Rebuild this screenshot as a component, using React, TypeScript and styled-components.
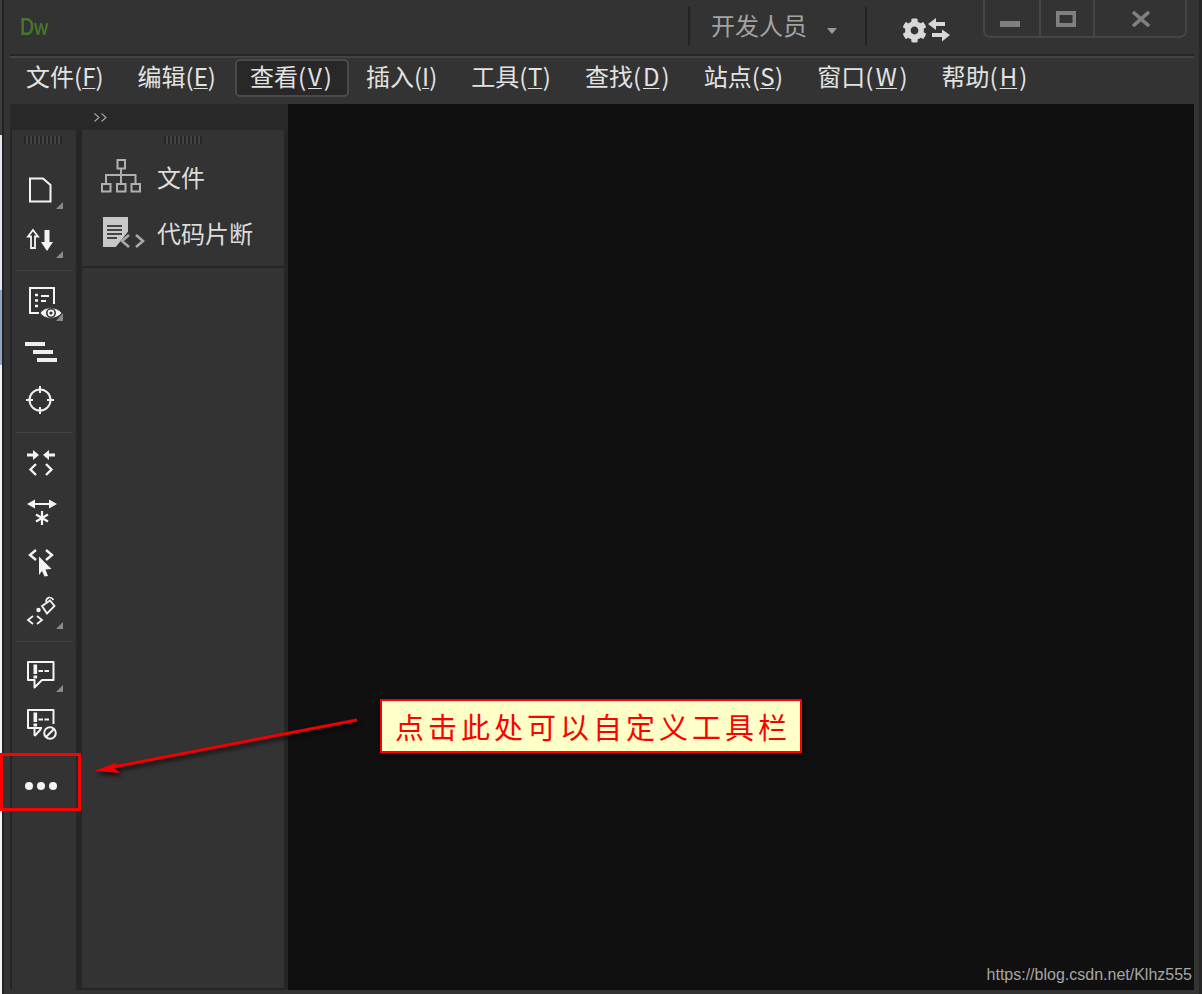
import React from "react";
import styled, { createGlobalStyle } from "styled-components";
import { FaCog } from "react-icons/fa";

const Global = createGlobalStyle`
  html, body { margin: 0; padding: 0; background: #fff; }
  #root { width: 1202px; height: 994px; }
`;

const CJK = `"Noto Sans CJK SC", "Noto Sans", sans-serif`;

const Page = styled.div`
  position: relative;
  width: 1202px;
  height: 994px;
  box-sizing: border-box;
  padding-left: 2px;
  overflow: hidden;
  background: linear-gradient(to bottom, #3c3c3c 0, #3c3c3c 135px, #dfe6f0 135px, #dfe6f0 290px, #8fa6c4 290px, #8fa6c4 365px, #f4f4f4 365px, #f4f4f4 100%);
  font-family: ${CJK};
`;

const Window = styled.div`
  height: 100%;
  box-sizing: border-box;
  background: #333333;
  border-left: 2px solid #222222;
  border-right: 3px solid #262626;
  padding: 0 5px 4px 6px;
  display: flex;
  flex-direction: column;
`;

const TitleBar = styled.div`
  height: 54px;
  display: flex;
  align-items: center;
  flex: none;
`;

const Logo = styled.div`
  margin-left: 10px;
  width: 40px;
  flex: none;
  font-family: Lato, sans-serif;
  font-weight: 700;
  font-size: 22px;
  letter-spacing: -0.5px;
  color: #47762a;
  margin-top: -1px;
  transform: scaleX(0.84);
  transform-origin: left center;
`;

const TitleSep = styled.div<{ $left: number }>`
  width: 2px;
  height: 39px;
  margin-left: ${(p) => p.$left}px;
  margin-top: -1px;
  background: #242424;
  flex: none;
`;

const Workspace = styled.div`
  margin-left: 21px;
  width: 96px;
  font-size: 24px;
  line-height: 34px;
  color: #a3a3a3;
  margin-top: -5px;
  white-space: nowrap;
`;

const Caret = styled.svg`
  margin-left: 20px;
  width: 10px;
  height: 6px;
  margin-top: 8px;
  flex: none;
`;

const SyncGroup = styled.div`
  margin-left: 35px;
  width: 48px;
  height: 26px;
  display: flex;
  align-items: center;
  gap: 1px;
  color: #d8d8d8;
  margin-top: 6px;
  flex: none;
`;

const WinButtons = styled.div`
  margin-left: 33px;
  margin-right: 7px;
  width: 204px;
  height: 38px;
  box-sizing: border-box;
  border: 2px solid #454545;
  border-top: none;
  border-radius: 0 0 7px 7px;
  display: flex;
  align-self: flex-start;
  flex: none;
`;

const WinButton = styled.div<{ $w: number; $pad: number; $last?: boolean }>`
  width: ${(p) => p.$w}px;
  box-sizing: border-box;
  padding: 11px 0 0 ${(p) => p.$pad}px;
  border-right: ${(p) => (p.$last ? "none" : "2px solid #454545")};
  flex: none;
  svg { display: block; }
`;

const Divider = styled.div`
  height: 2px;
  background: #262626;
  border-bottom: 2px solid #444444;
  flex: none;
`;

const MenuBar = styled.div`
  height: 46px;
  flex: none;
  display: flex;
  gap: 2px;
  padding: 1px 0 0 1px;
  box-sizing: border-box;
  align-items: flex-start;
`;

const MenuItem = styled.div<{ $active?: boolean }>`
  height: 38px;
  box-sizing: border-box;
  padding: 0 15px 0 13px;
  border: 2px solid ${(p) => (p.$active ? "#4a4a4a" : "transparent")};
  border-radius: 5px;
  background: ${(p) => (p.$active ? "#282828" : "transparent")};
  color: #e2e2e2;
  font-size: 24px;
  line-height: 30px;
  white-space: nowrap;
`;

const Mnemonic = styled.u<{ $extra: number }>`
  margin: 0 ${(p) => p.$extra / 2}px;
  text-underline-offset: 2px;
  text-decoration-thickness: 1px;
`;

const Body = styled.div`
  flex: 1;
  min-height: 0;
  display: flex;
  background: #282828;
`;

const Dock = styled.div`
  width: 278px;
  flex: none;
  display: flex;
  flex-direction: column;
`;

const DockHeader = styled.div`
  height: 26px;
  flex: none;
  padding: 9px 0 0 84px;
  box-sizing: border-box;
  svg { display: block; }
`;

const DockColumns = styled.div`
  flex: 1;
  min-height: 0;
  display: flex;
  padding-left: 2px;
  background: #262626;
`;

const Toolbar = styled.div`
  width: 64px;
  flex: none;
  background: #333333;
  padding-top: 6px;
  box-sizing: border-box;
`;

const Grip = styled.div<{ $left: number }>`
  width: 38px;
  height: 8px;
  margin-left: ${(p) => p.$left}px;
  background: repeating-linear-gradient(to right, #262626 0, #262626 2px, #444444 2px, #444444 4px);
`;

const SlotGroup = styled.div<{ $top?: number }>`
  margin-top: ${(p) => p.$top ?? 0}px;
`;

const Slot = styled.svg`
  display: block;
  width: 64px;
  height: 49px;
`;

const ToolSep = styled.div<{ $bottom: number }>`
  width: 58px;
  height: 1px;
  margin: 6px 0 ${(p) => p.$bottom}px 3px;
  background: #424242;
`;

const Panel = styled.div`
  width: 202px;
  margin: 0 4px 2px 6px;
  flex: none;
  display: flex;
  flex-direction: column;
  gap: 2px;
`;

const PanelTop = styled.div`
  height: 136px;
  flex: none;
  background: #333333;
  padding-top: 6px;
  box-sizing: border-box;
`;

const PanelBottom = styled.div`
  flex: 1;
  background: #333333;
`;

const PanelRow = styled.div`
  height: 56px;
  display: flex;
  align-items: center;
  color: #dcdcdc;
  font-size: 24px;
  line-height: 32px;
  svg { display: block; flex: none; }
`;

const PanelRows = styled.div`
  margin-top: 6px;
`;

const PanelLabel = styled.span`
  margin-top: -3px;
`;

const Editor = styled.div`
  flex: 1;
  background: #101010;
  display: flex;
  align-items: flex-end;
  justify-content: flex-end;
`;

const Watermark = styled.div`
  font-family: "Liberation Sans", Arial, sans-serif;
  font-size: 16px;
  line-height: 18px;
  color: #a6a6a6;
  margin: 0 2px 6px 0;
`;

const RedBox = styled.div`
  position: absolute;
  left: 0;
  top: 753px;
  width: 81px;
  height: 58px;
  box-sizing: border-box;
  border: 3px solid #ff0000;
`;

const Callout = styled.div`
  position: absolute;
  left: 380px;
  top: 699px;
  width: 422px;
  height: 54px;
  box-sizing: border-box;
  border: 2px solid #ff0000;
  background: #ffffc8;
  color: #ff0000;
  font-size: 29px;
  line-height: 50px;
  padding-left: 13px;
  letter-spacing: 4px;
  white-space: nowrap;
  box-shadow: 2px 3px 6px rgba(0, 0, 0, 0.6);
`;

const ArrowLayer = styled.svg`
  position: absolute;
  left: 85px;
  top: 710px;
  width: 285px;
  height: 75px;
  overflow: visible;
  pointer-events: none;
  filter: drop-shadow(2px 3px 2px rgba(0, 0, 0, 0.7));
`;

const W = "#f4f4f4";
const Tri = ({ y }: { y: number }) => <path d={`M63 ${y}V${y + 7}H56Z`} fill="#8a8a8a" />;

const Tool: React.FC<{ top: number; children: React.ReactNode }> = ({ top, children }) => (
  <Slot viewBox={`12 ${top} 64 49`}>{children}</Slot>
);

const Menus: [string, string, number][] = [
  ["文件", "F", 0],
  ["编辑", "E", 0],
  ["查看", "V", 4],
  ["插入", "I", 0],
  ["工具", "T", 1],
  ["查找", "D", 4],
  ["站点", "S", 1],
  ["窗口", "W", 5],
  ["帮助", "H", 4],
];

export default function App() {
  return (
    <Page>
      <Global />
      <Window>
        <TitleBar>
          <Logo>Dw</Logo>
          <TitleSep $left={628} />
          <Workspace>开发人员</Workspace>
          <Caret viewBox="0 0 10 6"><path d="M0 0H10L5 6Z" fill="#9a9a9a" /></Caret>
          <TitleSep $left={28} />
          <SyncGroup>
            <FaCog size={25} style={{ flex: "none" }} />
            <svg width="22" height="26" viewBox="928 17 22 26" style={{ flex: "none" }}>
              <path d="M928 24L936 18V22H945V26H936V30Z" fill="#d8d8d8" />
              <path d="M950 35L942 29.5V33H932V37H942V41.5Z" fill="#d8d8d8" />
            </svg>
          </SyncGroup>
          <WinButtons>
            <WinButton $w={56} $pad={15}>
              <svg width="20" height="16"><rect y="10" width="20" height="6" fill="#808080" /></svg>
            </WinButton>
            <WinButton $w={54} $pad={15}>
              <svg width="20" height="16"><path fillRule="evenodd" d="M0 0H20V16H0ZM3.5 4V12H16.5V4Z" fill="#808080" /></svg>
            </WinButton>
            <WinButton $w={90} $pad={36} $last>
              <svg width="20" height="16"><path d="M2 1L18 15M18 1L2 15" stroke="#808080" strokeWidth="3.6" fill="none" /></svg>
            </WinButton>
          </WinButtons>
        </TitleBar>
        <Divider />
        <MenuBar>
          {Menus.map(([name, key, extra]) => (
            <MenuItem key={key} $active={key === "V"}>
              {name}(<Mnemonic $extra={extra}>{key}</Mnemonic>)
            </MenuItem>
          ))}
        </MenuBar>
        <Body>
          <Dock>
            <DockHeader>
              <svg width="13" height="9" viewBox="0 0 13 9">
                <path d="M0.5 0.5L5 4.5L0.5 8.5M7.5 0.5L12 4.5L7.5 8.5" fill="none" stroke="#a8a8a8" strokeWidth="1.1" />
              </svg>
            </DockHeader>
            <DockColumns>
              <Toolbar>
                <Grip $left={12} />
                <SlotGroup $top={22}>
                  <Tool top={166}>
                    <path d="M30 178.5H43L50.5 185V201.5H30Z" fill="none" stroke={W} strokeWidth="2" />
                    <Tri y={202} />
                  </Tool>
                  <Tool top={215}>
                    <path d="M33 230L38 236.5H35V248H31V236.5H28Z" fill="none" stroke={W} strokeWidth="1.8" />
                    <path d="M44.5 230H49.5V242H53L47 251L41 242H44.5Z" fill={W} />
                    <Tri y={251} />
                  </Tool>
                </SlotGroup>
                <ToolSep $bottom={8} />
                <SlotGroup>
                  <Tool top={279}>
                    <path d="M39 313H30V288H54V304" fill="none" stroke={W} strokeWidth="2" />
                    <path d="M35 295H38M35 300.5H38M35 306H38" stroke={W} strokeWidth="2.6" />
                    <path d="M41 296H49M41 301H46" stroke={W} strokeWidth="2" />
                    <path d="M40 313C44 306 57 306 62 313C57 320 44 320 40 313Z" fill={W} stroke="#333" strokeWidth="1" />
                    <circle cx="51" cy="313" r="4.2" fill="none" stroke="#333" strokeWidth="1.6" />
                    <circle cx="51" cy="313" r="1.6" fill="#333" />
                    <path d="M63 313V321H56Z" fill="#8a8a8a" />
                  </Tool>
                  <Tool top={328}>
                    <rect x="25" y="342" width="20" height="4" fill="#eeeeee" />
                    <rect x="33" y="350" width="20" height="4" fill="#eeeeee" />
                    <rect x="37" y="358" width="20" height="4" fill="#eeeeee" />
                  </Tool>
                  <Tool top={377}>
                    <circle cx="40" cy="400" r="10.5" fill="none" stroke="#eeeeee" strokeWidth="2" />
                    <path d="M26 400H33M47 400H54M40 386V393M40 407V414" stroke="#eeeeee" strokeWidth="2" />
                  </Tool>
                </SlotGroup>
                <ToolSep $bottom={6} />
                <SlotGroup>
                  <Tool top={439}>
                    <path d="M27 453.5H33V450L39 455L33 460V456.5H27Z" fill={W} />
                    <path d="M55 453.5H49V450L43 455L49 460V456.5H55Z" fill={W} />
                    <path d="M36 464L30.5 469.5L36 475M46 464L51.5 469.5L46 475" fill="none" stroke={W} strokeWidth="2.4" />
                  </Tool>
                  <Tool top={488}>
                    <path d="M27 504L35 499.5V503H49V499.5L57 504L49 508.5V505H35V508.5Z" fill={W} />
                    <path d="M42 511V525M36 514.5L48 521.5M48 514.5L36 521.5" stroke={W} strokeWidth="2.2" fill="none" />
                  </Tool>
                  <Tool top={537}>
                    <path d="M36 550L30 555L36 560M46 550L52 555L46 560" fill="none" stroke={W} strokeWidth="2.4" />
                    <path d="M39 556.5L51.5 569L45.5 569.5L48 576L44.5 576.5L42 571L39 575Z" fill={W} />
                  </Tool>
                  <Tool top={586}>
                    <path d="M42 606L50 600.5L54.5 606L47 613.5Z" fill="none" stroke={W} strokeWidth="1.8" />
                    <path d="M46 602C46 597 51 596 53.5 600" fill="none" stroke={W} strokeWidth="1.6" />
                    <circle cx="38.5" cy="610" r="2.2" fill={W} />
                    <path d="M33 616L28 620L33 624M37 616L42 620L37 624" fill="none" stroke={W} strokeWidth="1.8" />
                    <Tri y={622} />
                  </Tool>
                </SlotGroup>
                <ToolSep $bottom={7} />
                <SlotGroup>
                  <Tool top={649}>
                    <path d="M28 662H53.5V680H42L34.5 687.5V680H28Z" fill="none" stroke={W} strokeWidth="2" strokeLinejoin="round" />
                    <rect x="33.5" y="664.5" width="3.6" height="9.5" fill={W} />
                    <rect x="33.5" y="675.5" width="3.6" height="3" fill={W} />
                    <path d="M38.5 671H43M44.5 671H49" stroke={W} strokeWidth="2" />
                    <Tri y={685} />
                  </Tool>
                  <Tool top={698}>
                    <path d="M42 728H34.5V735.5M34.5 728H28V710H53.5V724" fill="none" stroke={W} strokeWidth="2" strokeLinejoin="round" />
                    <path d="M34.5 736L41 729" stroke={W} strokeWidth="2" />
                    <rect x="33.5" y="712.5" width="3.6" height="9.5" fill={W} />
                    <rect x="33.5" y="723.5" width="3.6" height="3" fill={W} />
                    <path d="M38.5 719.5H43M44.5 719.5H49" stroke={W} strokeWidth="2" />
                    <circle cx="50" cy="733" r="5.8" fill="none" stroke={W} strokeWidth="2" />
                    <path d="M46 737L54 729" stroke={W} strokeWidth="2" />
                  </Tool>
                </SlotGroup>
                <SlotGroup $top={14}>
                  <Tool top={761}>
                    <circle cx="29" cy="786" r="4" fill={W} />
                    <circle cx="41" cy="786" r="4" fill={W} />
                    <circle cx="53" cy="786" r="4" fill={W} />
                  </Tool>
                </SlotGroup>
              </Toolbar>
              <Panel>
                <PanelTop>
                  <Grip $left={82} />
                  <PanelRows>
                    <PanelRow>
                      <svg width="75" height="56" viewBox="82 150 75 56">
                        <g fill="none" stroke="#b0b0b0" strokeWidth="2">
                          <rect x="117.5" y="160" width="7.5" height="8.5" />
                          <path d="M121 168.5V183M106 183V175H135.5V183" />
                          <rect x="102" y="184" width="8.5" height="7.5" />
                          <rect x="117" y="184" width="8.5" height="7.5" />
                          <rect x="131.5" y="184" width="8.5" height="7.5" />
                        </g>
                      </svg>
                      <PanelLabel>文件</PanelLabel>
                    </PanelRow>
                    <PanelRow>
                      <svg width="75" height="56" viewBox="82 206 75 56">
                        <rect x="103" y="217" width="25" height="30" fill="#c8c8c8" />
                        <path d="M107 226H122M107 230H122M107 234H122M107 238H117" stroke="#444" strokeWidth="1.8" />
                        <path d="M128.5 231V248H115Z" fill="#333" />
                        <path d="M129 235L122 241L129 247" fill="none" stroke="#a8a8a8" strokeWidth="2.6" />
                        <path d="M136 235L143 241L136 247" fill="none" stroke="#a8a8a8" strokeWidth="2.6" />
                      </svg>
                      <PanelLabel>代码片断</PanelLabel>
                    </PanelRow>
                  </PanelRows>
                </PanelTop>
                <PanelBottom />
              </Panel>
            </DockColumns>
          </Dock>
          <Editor>
            <Watermark>https://blog.csdn.net/Klhz555</Watermark>
          </Editor>
        </Body>
      </Window>
      <RedBox />
      <Callout>点击此处可以自定义工具栏</Callout>
      <ArrowLayer viewBox="85 710 285 75">
        <path d="M357 720L113 767" stroke="#f00000" strokeWidth="3" fill="none" />
        <path d="M94 771L118 762L113 767L120 773Z" fill="#f00000" />
      </ArrowLayer>
    </Page>
  );
}
